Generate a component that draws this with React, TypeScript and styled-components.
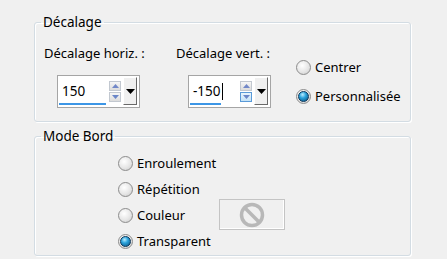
import styled, { createGlobalStyle } from "styled-components";

const GlobalStyle = createGlobalStyle`
  html, body {
    margin: 0;
    padding: 0;
    background: #f0f0f0;
  }
  body {
    font-family: "Noto Sans", "Open Sans", sans-serif;
    font-size: 13px;
    color: #000;
  }
`;

const Page = styled.div`
  width: 447px;
  height: 259px;
  box-sizing: border-box;
  padding: 14px 0 0 34px;
  display: flex;
  flex-direction: column;
  gap: 6px;
`;

const Group = styled.fieldset<{ $height: number }>`
  margin: 0;
  width: 377px;
  height: ${({ $height }) => $height}px;
  box-sizing: border-box;
  border: 1px solid #d3dce3;
  border-radius: 3px;
  box-shadow: inset 1px 1px 0 #ffffff, 1px 1px 0 #ffffff;
  padding: 0;
`;

const Legend = styled.legend`
  margin-left: 6px;
  padding: 0 2px;
  font-size: 13.5px;
  line-height: 16px;
  color: #000;
`;

const OffsetRow = styled.div`
  display: flex;
  padding: 14px 0 0 9px;
`;

const Field = styled.div<{ $width: number; $indent: number }>`
  width: ${({ $width }) => $width}px;
  display: flex;
  flex-direction: column;
  align-items: flex-start;

  & > :last-child {
    margin-left: ${({ $indent }) => $indent}px;
  }
`;

const FieldLabel = styled.div`
  font-size: 13px;
  line-height: 18px;
  height: 31px;
`;

const SpinBox = styled.div`
  width: 83px;
  height: 33px;
  box-sizing: border-box;
  border: 1px solid #a5a5a5;
  background: #ffffff;
  display: flex;
  align-items: flex-start;
  padding: 3px 2px 0 1px;
  gap: 2px;
`;

const SpinText = styled.div<{ $underline: number }>`
  flex: 1;
  height: 26px;
  position: relative;
  font-size: 13.5px;
  line-height: 24px;
  padding-left: 3px;
  color: #000;

  &::after {
    content: "";
    position: absolute;
    left: 0;
    bottom: 0;
    width: ${({ $underline }) => $underline}px;
    height: 2px;
    background: #3c96e6;
  }
`;

const Caret = styled.span`
  display: inline-block;
  width: 1px;
  height: 17px;
  background: #000;
  vertical-align: -4px;
  margin-left: 1px;
`;

const Arrows = styled.div`
  display: flex;
  flex-direction: column;
  gap: 1px;
  padding-top: 2px;
`;

const ArrowButton = styled.div<{ $hot?: boolean }>`
  width: 12px;
  height: 10px;
  box-sizing: border-box;
  border: 1px solid ${({ $hot }) => ($hot ? "#5a9ad8" : "#c2c8d0")};
  background: ${({ $hot }) =>
    $hot
      ? "linear-gradient(#e8f4fc, #c4e2f6)"
      : "linear-gradient(#f6f6f6, #dcdcdc)"};
  display: flex;
  align-items: center;
  justify-content: center;
`;

const DropButton = styled.div`
  width: 14px;
  height: 28px;
  margin-top: -2px;
  box-sizing: border-box;
  background: #f0f0f0;
  border-top: 1px solid #ffffff;
  border-left: 1px solid #ffffff;
  border-right: 1px solid #696969;
  border-bottom: 1px solid #696969;
  display: flex;
  align-items: center;
  justify-content: center;
`;

const Choices = styled.div<{ $gap: number; $top: number; $width?: number }>`
  display: flex;
  flex-direction: column;
  gap: ${({ $gap }) => $gap}px;
  padding-top: ${({ $top }) => $top}px;
  width: ${({ $width }) => ($width ? `${$width}px` : "auto")};
`;

const Choice = styled.label`
  display: flex;
  align-items: center;
  gap: 4px;
  font-size: 13px;
  line-height: 16px;
  height: 16px;
`;

const RadioDot = styled.span<{ $checked?: boolean }>`
  width: 15px;
  height: 15px;
  box-sizing: border-box;
  border-radius: 50%;
  border: 1px solid #8c8c8c;
  background: radial-gradient(circle at 40% 35%, #ffffff 0%, #e6e6e6 55%, #c9c9c9 100%);
  display: flex;
  align-items: center;
  justify-content: center;

  &::after {
    content: "";
    display: ${({ $checked }) => ($checked ? "block" : "none")};
    width: 9px;
    height: 9px;
    border-radius: 50%;
    background: radial-gradient(circle at 40% 30%, #b9ecff 0%, #2aa3dc 40%, #0a4d7c 100%);
    border: 0.5px solid #08355a;
  }
`;

const BorderBody = styled.div`
  display: flex;
  padding-left: 83px;
`;

const ColorSwatch = styled.div`
  width: 66px;
  height: 31px;
  box-sizing: border-box;
  margin-top: 55px;
  border: 1px solid #c4c4c4;
  box-shadow: inset -1px -1px 0 #ffffff;
  display: flex;
  align-items: center;
  justify-content: center;
`;

function UpArrow({ color }: { color: string }) {
  return (
    <svg width="7" height="4" viewBox="0 0 7 4">
      <path d="M0 4 L3.5 0 L7 4 Z" fill={color} />
    </svg>
  );
}

function DownArrow({ color }: { color: string }) {
  return (
    <svg width="7" height="4" viewBox="0 0 7 4">
      <path d="M0 0 L7 0 L3.5 4 Z" fill={color} />
    </svg>
  );
}

function Spinner({
  value,
  underline,
  caret,
  hotDown,
}: {
  value: string;
  underline: number;
  caret?: boolean;
  hotDown?: boolean;
}) {
  return (
    <SpinBox>
      <SpinText $underline={underline}>
        {value}
        {caret && <Caret />}
      </SpinText>
      <Arrows>
        <ArrowButton>
          <UpArrow color="#7288c8" />
        </ArrowButton>
        <ArrowButton $hot={hotDown}>
          <DownArrow color="#6a86c8" />
        </ArrowButton>
      </Arrows>
      <DropButton>
        <svg width="9" height="5" viewBox="0 0 9 5">
          <path d="M0 0 L9 0 L4.5 5 Z" fill="#000" />
        </svg>
      </DropButton>
    </SpinBox>
  );
}

function Radio({ label, checked }: { label: string; checked?: boolean }) {
  return (
    <Choice>
      <RadioDot $checked={checked} />
      {label}
    </Choice>
  );
}

export default function App() {
  return (
    <>
      <GlobalStyle />
      <Page>
        <Group $height={108}>
          <Legend>Décalage</Legend>
          <OffsetRow>
            <Field $width={132} $indent={13}>
              <FieldLabel>Décalage horiz. :</FieldLabel>
              <Spinner value="150" underline={47} />
            </Field>
            <Field $width={120} $indent={12}>
              <FieldLabel>Décalage vert. :</FieldLabel>
              <Spinner value="-150" underline={31} caret hotDown />
            </Field>
            <Choices $gap={13} $top={15}>
              <Radio label="Centrer" />
              <Radio label="Personnalisée" checked />
            </Choices>
          </OffsetRow>
        </Group>
        <Group $height={128}>
          <Legend>Mode Bord</Legend>
          <BorderBody>
            <Choices $gap={10} $top={11} $width={101}>
              <Radio label="Enroulement" />
              <Radio label="Répétition" />
              <Radio label="Couleur" />
              <Radio label="Transparent" checked />
            </Choices>
            <ColorSwatch>
              <svg width="26" height="26" viewBox="0 0 26 26">
                <circle cx="13" cy="13" r="10.5" fill="none" stroke="#b8b8b8" strokeWidth="3.5" />
                <line x1="6" y1="6" x2="20" y2="20" stroke="#b8b8b8" strokeWidth="3.5" />
              </svg>
            </ColorSwatch>
          </BorderBody>
        </Group>
      </Page>
    </>
  );
}
